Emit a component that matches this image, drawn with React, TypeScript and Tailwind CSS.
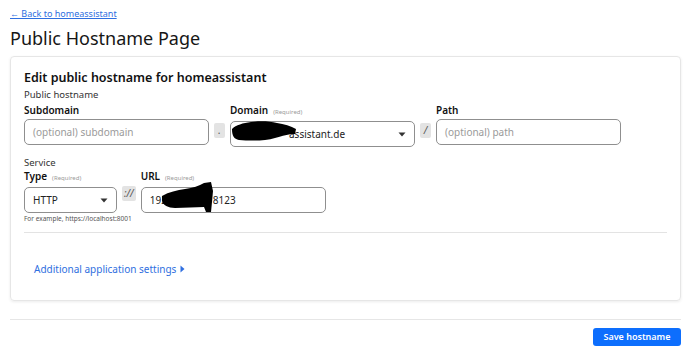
import React from "react";

function Caret() {
  return (
    <svg width="8" height="5" viewBox="0 0 8 5" className="shrink-0">
      <path d="M0.5 0.5h7L4 4.5z" fill="#333" />
    </svg>
  );
}

function Sep({ children }: { children: React.ReactNode }) {
  return (
    <div className="flex h-[15px] min-w-[11px] items-center justify-center rounded-[2px] bg-[#e3e3e3] px-[2px] text-[10px] italic leading-[15px] text-[#555]">
      {children}
    </div>
  );
}

function Label({ text, required }: { text: string; required?: boolean }) {
  return (
    <div className="mb-[3px] flex items-baseline gap-[5px] text-[10px] font-semibold leading-[12px] text-[#111]">
      {text}
      {required && <span className="text-[6px] font-normal text-[#9a9a9a]">(Required)</span>}
    </div>
  );
}

export default function App() {
  return (
    <div
      className="h-[350px] w-[690px] overflow-hidden bg-white text-[#222]"
      style={{ fontFamily: '"Noto Sans", "Open Sans", sans-serif' }}
    >
      <div className="px-[10px] pt-[8px]">
        <div className="text-[9px] leading-[12px]">
          <a href="#" className="text-[#2f6fe0] underline">
            ← Back to homeassistant
          </a>
        </div>
        <h1 className="mt-[5px] text-[18px] leading-[26px] text-[#161616]">Public Hostname Page</h1>

        <div className="mt-[5px] h-[245px] w-[671px] rounded-[4px] border border-[#e6e6e6] px-[13px] pt-[13px] shadow-[0_1px_3px_rgba(0,0,0,0.08)]">
          <h2 className="text-[12.5px] font-semibold leading-[16px] text-[#111]">
            Edit public hostname for homeassistant
          </h2>
          <div className="mt-[2px] text-[9.5px] leading-[13px] text-[#333]">Public hostname</div>

          <div className="mt-[3px] flex items-start gap-[5px]">
            <div className="w-[185px]">
              <Label text="Subdomain" />
              <div className="flex h-[26px] items-center rounded-[5px] border border-[#8f8f8f] px-[8px] text-[10px] text-[#9a9a9a]">
                (optional) subdomain
              </div>
            </div>
            <div className="mt-[19px]">
              <Sep>.</Sep>
            </div>
            <div className="relative w-[185px]">
              <Label text="Domain" required />
              <div className="flex h-[26px] items-center justify-between rounded-[5px] border border-[#8f8f8f] pl-[8px] pr-[8px] text-[10px] text-[#222]">
                <span className="pl-[50px]">assistant.de</span>
                <Caret />
              </div>
              <svg className="absolute left-[1px] top-[16px]" width="66" height="22" viewBox="0 0 66 22">
                <path
                  d="M1 9 C5 5 12 3 20 2 C28 1 38 1 46 3 C53 4 60 6 65 9 L64 14 C57 14 52 16 44 18 C34 21 20 21 8 20 C3 19 1 16 1 9 Z"
                  fill="#000"
                />
              </svg>
            </div>
            <div className="mt-[19px]">
              <Sep>/</Sep>
            </div>
            <div className="w-[185px]">
              <Label text="Path" />
              <div className="flex h-[26px] items-center rounded-[5px] border border-[#8f8f8f] px-[8px] text-[10px] text-[#9a9a9a]">
                (optional) path
              </div>
            </div>
          </div>

          <div className="mt-[9px] text-[9.5px] leading-[13px] text-[#333]">Service</div>
          <div className="mt-[1px] flex items-start gap-[5px]">
            <div className="w-[93px]">
              <Label text="Type" required />
              <div className="flex h-[26px] items-center justify-between rounded-[5px] border border-[#8f8f8f] px-[8px] text-[10px] text-[#222]">
                HTTP
                <Caret />
              </div>
              <div className="mt-[1px] whitespace-nowrap text-[6.5px] leading-[10px] text-[#555]">
                For example, https://localhost:8001
              </div>
            </div>
            <div className="mt-[16px]">
              <Sep>://</Sep>
            </div>
            <div className="relative w-[185px]">
              <Label text="URL" required />
              <div className="flex h-[26px] items-center rounded-[5px] border border-[#8f8f8f] px-[8px] text-[10px] text-[#222]">
                <span>192</span>
                <span className="pl-[46px]">8123</span>
              </div>
              <svg className="absolute left-[20px] top-[12px]" width="56" height="31" viewBox="0 0 56 31">
                <path
                  d="M1 14 C8 10 16 8 24 7 C32 6 38 4 43 1 L50 0 L52 9 L51 20 L50 30 L45 30 L43 25 C34 25 24 26 14 26 C7 26 2 23 1 19 Z"
                  fill="#000"
                />
              </svg>
            </div>
          </div>

          <div className="mt-[8px] border-t border-[#e3e3e3]" />

          <div className="mt-[29px] flex items-center gap-[4px] pl-[10px] text-[10px] leading-[14px] text-[#2f6fe0]">
            Additional application settings
            <svg width="5" height="8" viewBox="0 0 5 8">
              <path d="M0.5 0.5L4.5 4L0.5 7.5z" fill="#2f6fe0" />
            </svg>
          </div>
        </div>

        <div className="mt-[18px] w-[671px] border-t border-[#e6e6e6]" />
        <div className="mt-[8px] flex w-[671px] justify-end">
          <button className="flex h-[18px] w-[88px] items-center justify-center rounded-[3px] bg-[#0d6efd] text-[9px] font-semibold leading-[18px] text-white">
            Save hostname
          </button>
        </div>
      </div>
    </div>
  );
}
